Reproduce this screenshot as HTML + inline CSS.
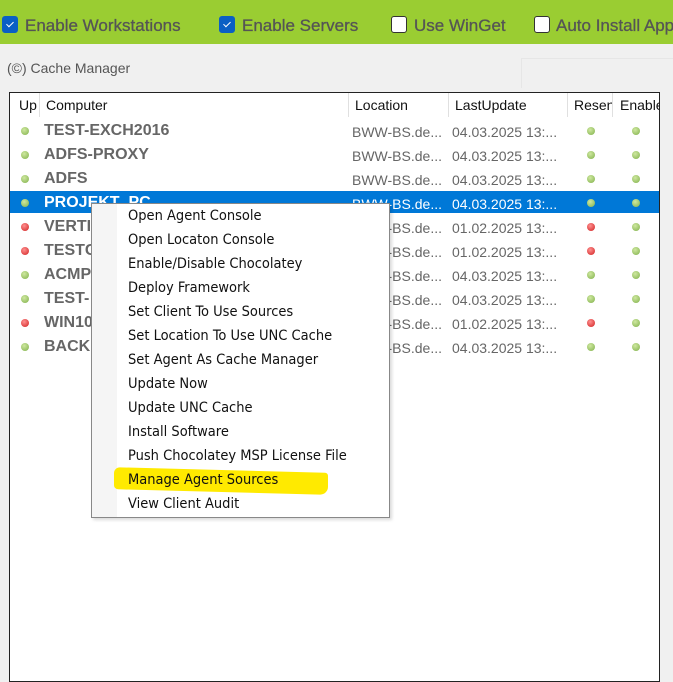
<!DOCTYPE html>
<html><head><style>
*{margin:0;padding:0;box-sizing:border-box}
body{width:673px;height:672px;background:#f0f0f0;font-family:"Liberation Sans",sans-serif;position:relative;overflow:hidden}
.bar{position:absolute;left:0;top:0;width:673px;height:44px;background:#9acd32}
.cb{position:absolute;top:16px;width:16px;height:17px;border-radius:3px;border:1px solid #333;background:#fff}
.cb.on{background:#0a5fc4;border-color:#0a5fc4}
.cb.on:after{content:"";position:absolute;left:5px;top:3px;width:3px;height:6px;border:solid #fff;border-width:0 1px 1px 0;transform:rotate(45deg)}
.lbl{position:absolute;top:16px;font-size:17px;color:#555;white-space:nowrap;-webkit-text-stroke:0.3px #555}
.t{position:absolute;font-size:14px;color:#555}
.box{position:absolute;left:9px;top:92px;width:651px;height:590px;border:1px solid #222;background:#fff}
.hd{position:absolute;top:0;height:24px;font-size:14px;color:#111;line-height:24px;border-right:1px solid #e0e0e0;padding-left:6px;white-space:nowrap;overflow:hidden}
.row{position:absolute;left:0;width:649px;height:22px}
.row.sel{background:#0078d7}
.d{position:absolute;width:8px;height:8px;border-radius:50%;top:8px}
.g{background:radial-gradient(circle at 40% 35%,#cfe8a0,#7fb04a)}
.r{background:radial-gradient(circle at 40% 35%,#ff9090,#d02020)}
.nm{position:absolute;left:34px;top:2px;font-size:16px;font-weight:bold;color:#666;line-height:20px}
.c{position:absolute;top:3px;font-size:14px;color:#666;line-height:20px;white-space:nowrap}
.sel .nm,.sel .c{color:#fff}
.menu{position:absolute;left:91px;top:203px;width:299px;height:315px;background:#fff;border:1px solid #888;box-shadow:2px 2px 3px rgba(0,0,0,.15)}
.gut{position:absolute;left:0;top:0;width:25px;height:313px;background:#f5f5f5}
.mi{position:absolute;left:36px;font-size:14.5px;color:#111;font-family:"DejaVu Sans Condensed","Liberation Sans",sans-serif;line-height:24px;white-space:nowrap}
</style></head><body>
<div class="bar"></div>
<div class="cb on" style="left:2px"></div><div class="lbl" style="left:25px">Enable Workstations</div>
<div class="cb on" style="left:219px"></div><div class="lbl" style="left:242px">Enable Servers</div>
<div class="cb" style="left:391px"></div><div class="lbl" style="left:414px">Use WinGet</div>
<div class="cb" style="left:534px"></div><div class="lbl" style="left:556px">Auto Install App</div>
<div class="t" style="left:7px;top:60px">(©) Cache Manager</div>
<div style="position:absolute;left:521px;top:58px;width:152px;height:30px;border-left:1px solid #e6e6e6;border-top:1px solid #e6e6e6"></div>
<div class="box">
<div class="hd" style="left:0;width:30px;padding-left:9px">Up</div>
<div class="hd" style="left:30px;width:309px">Computer</div>
<div class="hd" style="left:339px;width:100px">Location</div>
<div class="hd" style="left:439px;width:119px">LastUpdate</div>
<div class="hd" style="left:558px;width:45px">Resen</div>
<div class="hd" style="left:603px;width:46px;border:0;padding-left:7px">Enable</div>

<div class="row" style="top:26px"><div class="d g" style="left:11px"></div><div class="nm">TEST-EXCH2016</div><div class="c" style="left:342px">BWW-BS.de...</div><div class="c" style="left:442px">04.03.2025 13:...</div><div class="d g" style="left:577px"></div><div class="d g" style="left:622px"></div></div>
<div class="row" style="top:50px"><div class="d g" style="left:11px"></div><div class="nm">ADFS-PROXY</div><div class="c" style="left:342px">BWW-BS.de...</div><div class="c" style="left:442px">04.03.2025 13:...</div><div class="d g" style="left:577px"></div><div class="d g" style="left:622px"></div></div>
<div class="row" style="top:74px"><div class="d g" style="left:11px"></div><div class="nm">ADFS</div><div class="c" style="left:342px">BWW-BS.de...</div><div class="c" style="left:442px">04.03.2025 13:...</div><div class="d g" style="left:577px"></div><div class="d g" style="left:622px"></div></div>
<div class="row sel" style="top:98px"><div class="d g" style="left:11px"></div><div class="nm">PROJEKT_PC</div><div class="c" style="left:342px">BWW-BS.de...</div><div class="c" style="left:442px">04.03.2025 13:...</div><div class="d g" style="left:577px"></div><div class="d g" style="left:622px"></div></div>
<div class="row" style="top:122px"><div class="d r" style="left:11px"></div><div class="nm">VERTI</div><div class="c" style="left:342px">BWW-BS.de...</div><div class="c" style="left:442px">01.02.2025 13:...</div><div class="d r" style="left:577px"></div><div class="d g" style="left:622px"></div></div>
<div class="row" style="top:146px"><div class="d r" style="left:11px"></div><div class="nm">TESTC</div><div class="c" style="left:342px">BWW-BS.de...</div><div class="c" style="left:442px">01.02.2025 13:...</div><div class="d r" style="left:577px"></div><div class="d g" style="left:622px"></div></div>
<div class="row" style="top:170px"><div class="d g" style="left:11px"></div><div class="nm">ACMP</div><div class="c" style="left:342px">BWW-BS.de...</div><div class="c" style="left:442px">04.03.2025 13:...</div><div class="d g" style="left:577px"></div><div class="d g" style="left:622px"></div></div>
<div class="row" style="top:194px"><div class="d g" style="left:11px"></div><div class="nm">TEST-</div><div class="c" style="left:342px">BWW-BS.de...</div><div class="c" style="left:442px">04.03.2025 13:...</div><div class="d g" style="left:577px"></div><div class="d g" style="left:622px"></div></div>
<div class="row" style="top:218px"><div class="d r" style="left:11px"></div><div class="nm">WIN10</div><div class="c" style="left:342px">BWW-BS.de...</div><div class="c" style="left:442px">01.02.2025 13:...</div><div class="d r" style="left:577px"></div><div class="d g" style="left:622px"></div></div>
<div class="row" style="top:242px"><div class="d g" style="left:11px"></div><div class="nm">BACKUP</div><div class="c" style="left:342px">BWW-BS.de...</div><div class="c" style="left:442px">04.03.2025 13:...</div><div class="d g" style="left:577px"></div><div class="d g" style="left:622px"></div></div>
</div>
<div class="menu">
<div class="gut"></div>
<div style="position:absolute;left:22px;top:266px;width:214px;height:22px;background:#ffea00;border-radius:6px 3px 8px 4px;transform:skewY(1.5deg)"></div>
<div class="mi" style="top:0">Open Agent Console</div>
<div class="mi" style="top:24px">Open Locaton Console</div>
<div class="mi" style="top:48px">Enable/Disable Chocolatey</div>
<div class="mi" style="top:72px">Deploy Framework</div>
<div class="mi" style="top:96px">Set Client To Use Sources</div>
<div class="mi" style="top:120px">Set Location To Use UNC Cache</div>
<div class="mi" style="top:144px">Set Agent As Cache Manager</div>
<div class="mi" style="top:168px">Update Now</div>
<div class="mi" style="top:192px">Update UNC Cache</div>
<div class="mi" style="top:216px">Install Software</div>
<div class="mi" style="top:240px">Push Chocolatey MSP License File</div>
<div class="mi" style="top:264px">Manage Agent Sources</div>
<div class="mi" style="top:288px">View Client Audit</div>
</div>
</body></html>
